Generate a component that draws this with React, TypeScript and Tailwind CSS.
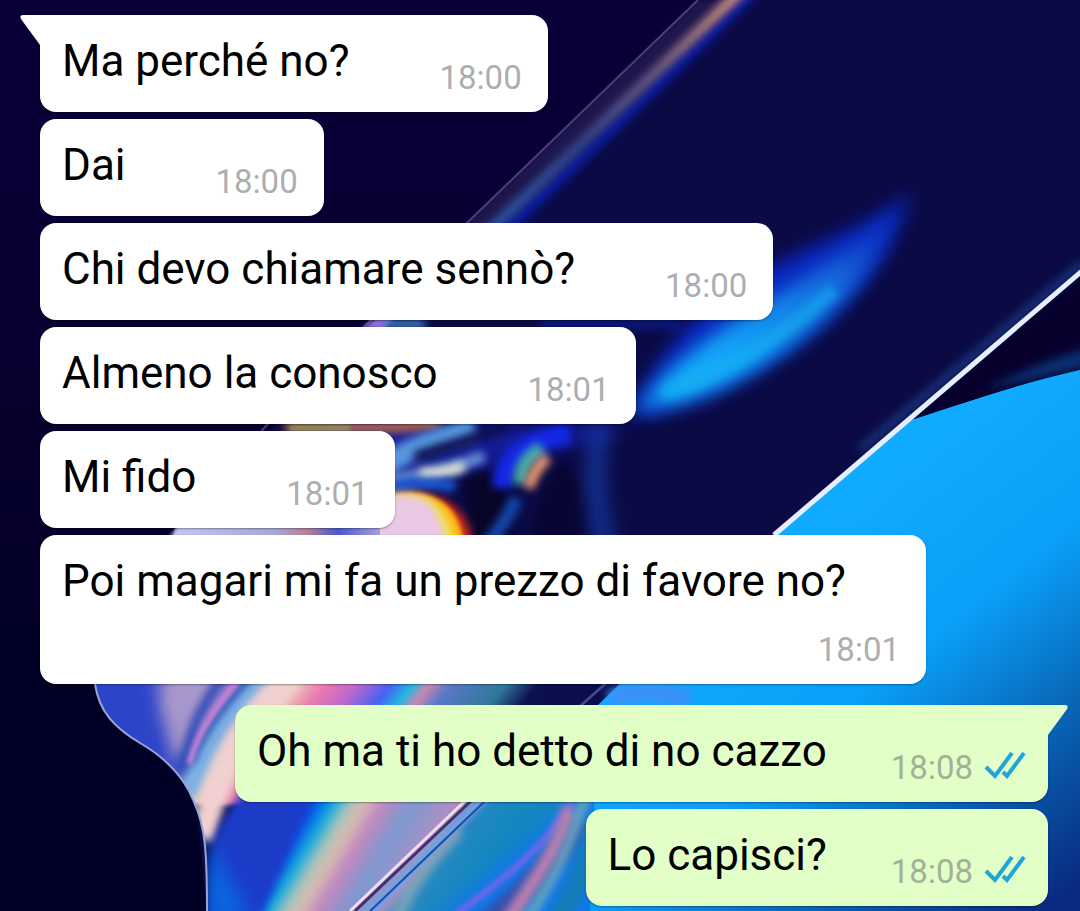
import clsx from "clsx";

type Message = {
    text: string;
    time: string;
    sent?: boolean;
    first?: boolean;
};

const messages: Message[] = [
    { text: "Ma perché no?", time: "18:00", first: true },
    { text: "Dai", time: "18:00" },
    { text: "Chi devo chiamare sennò?", time: "18:00" },
    { text: "Almeno la conosco", time: "18:01" },
    { text: "Mi fido", time: "18:01" },
    { text: "Poi magari mi fa un prezzo di favore no?", time: "18:01" },
    { text: "Oh ma ti ho detto di no cazzo", time: "18:08", sent: true, first: true },
    { text: "Lo capisci?", time: "18:08", sent: true },
];

function Wallpaper() {
    return (
        <svg
            aria-hidden="true"
            className="absolute inset-0 h-full w-full"
            viewBox="0 0 1080 911"
            preserveAspectRatio="xMidYMid slice"
        >
            <defs>
                <linearGradient id="night" x1="0" y1="0" x2="0" y2="1">
                    <stop offset="0" stopColor="#0a0038" />
                    <stop offset="0.45" stopColor="#06002f" />
                    <stop offset="0.75" stopColor="#020026" />
                    <stop offset="1" stopColor="#010026" />
                </linearGradient>
                <linearGradient id="sea" gradientUnits="userSpaceOnUse" x1="840" y1="520" x2="1110" y2="860">
                    <stop offset="0" stopColor="#10aaff" />
                    <stop offset="0.35" stopColor="#0a9ff8" />
                    <stop offset="0.65" stopColor="#0868b8" />
                    <stop offset="1" stopColor="#082a80" />
                </linearGradient>
                <linearGradient id="edge" gradientUnits="userSpaceOnUse" x1="735" y1="0" x2="480" y2="240">
                    <stop offset="0" stopColor="#d09080" />
                    <stop offset="0.3" stopColor="#6c5c80" />
                    <stop offset="0.6" stopColor="#344488" />
                    <stop offset="1" stopColor="#2858a8" />
                </linearGradient>
                <linearGradient id="arc" gradientUnits="userSpaceOnUse" x1="905" y1="200" x2="650" y2="410">
                    <stop offset="0" stopColor="#0a2cc0" stopOpacity="0.3" />
                    <stop offset="0.3" stopColor="#1568d8" />
                    <stop offset="0.7" stopColor="#12a4f8" />
                    <stop offset="0.9" stopColor="#14b0f8" />
                    <stop offset="1" stopColor="#1078e0" />
                </linearGradient>
                <linearGradient id="upperFolds" gradientUnits="userSpaceOnUse" x1="95" y1="0" x2="640" y2="0">
                    <stop offset="0" stopColor="#2c45c8" />
                    <stop offset="0.08" stopColor="#5560cc" />
                    <stop offset="0.14" stopColor="#a898cc" />
                    <stop offset="0.22" stopColor="#a08cc8" />
                    <stop offset="0.26" stopColor="#3a58c0" />
                    <stop offset="0.3" stopColor="#98b8e0" />
                    <stop offset="0.35" stopColor="#ecd0b8" />
                    <stop offset="0.41" stopColor="#ec78b0" />
                    <stop offset="0.47" stopColor="#b868d0" />
                    <stop offset="0.53" stopColor="#4860f0" />
                    <stop offset="0.57" stopColor="#20b8e0" />
                    <stop offset="0.6" stopColor="#c888b0" />
                    <stop offset="0.64" stopColor="#5878c8" />
                    <stop offset="0.74" stopColor="#307898" />
                    <stop offset="0.8" stopColor="#0c1050" />
                    <stop offset="1" stopColor="#0a0a48" />
                </linearGradient>
                <linearGradient id="lowerFolds" gradientUnits="userSpaceOnUse" x1="200" y1="0" x2="680" y2="0">
                    <stop offset="0" stopColor="#0a50e0" />
                    <stop offset="0.1" stopColor="#2038c0" />
                    <stop offset="0.2" stopColor="#1838c8" />
                    <stop offset="0.24" stopColor="#0a58e8" />
                    <stop offset="0.275" stopColor="#10a8e0" />
                    <stop offset="0.31" stopColor="#a8c4b8" />
                    <stop offset="0.34" stopColor="#d8bcb0" />
                    <stop offset="0.38" stopColor="#c088c0" />
                    <stop offset="0.44" stopColor="#7c98d0" />
                    <stop offset="0.53" stopColor="#b090c4" />
                    <stop offset="0.6" stopColor="#4c88c0" />
                    <stop offset="0.68" stopColor="#1488b8" />
                    <stop offset="0.76" stopColor="#1078e8" />
                    <stop offset="0.9" stopColor="#1880e0" />
                    <stop offset="1" stopColor="#1088c0" />
                </linearGradient>
                <linearGradient id="strip" gradientUnits="userSpaceOnUse" x1="170" y1="0" x2="380" y2="0">
                    <stop offset="0" stopColor="#c0c8f0" />
                    <stop offset="0.5" stopColor="#a8a8d8" />
                    <stop offset="0.65" stopColor="#b88098" />
                    <stop offset="0.8" stopColor="#4858d0" />
                    <stop offset="1" stopColor="#a8a0e0" />
                </linearGradient>
                <clipPath id="fabric">
                    <path d="M178 525 95 684C99 712 115 728 140 743 166 758 184 776 194 802 205 826 207 850 207 911H1080V525Z" />
                </clipPath>
                <filter id="soft2" filterUnits="userSpaceOnUse" x="-50" y="-50" width="1180" height="1011" colorInterpolationFilters="sRGB">
                    <feGaussianBlur stdDeviation="2" />
                </filter>
                <filter id="soft4" filterUnits="userSpaceOnUse" x="-50" y="-50" width="1180" height="1011" colorInterpolationFilters="sRGB">
                    <feGaussianBlur stdDeviation="4" />
                </filter>
                <filter id="soft9" filterUnits="userSpaceOnUse" x="-50" y="-50" width="1180" height="1011" colorInterpolationFilters="sRGB">
                    <feGaussianBlur stdDeviation="9" />
                </filter>
            </defs>

            <rect width="1080" height="911" fill="url(#night)" />

            {/* glass pane */}
            <path d="M698 0H1080V911H207L170 535 468 222Z" fill="#0b0a45" />
            <path d="M698 0H742L500 230H460Z" fill="#1e164c" filter="url(#soft2)" />
            <path d="M756 -10 496 240" stroke="#0b1ca0" strokeWidth="12" filter="url(#soft4)" />
            <path d="M744 -12 484 236" stroke="url(#edge)" strokeWidth="11" filter="url(#soft4)" />
            <path d="M698 0 468 222 265 427 170 535" fill="none" stroke="#4c3e78" strokeWidth="2" />
            <path d="M362 328 376 318H395L385 330Z" fill="#9070e0" filter="url(#soft2)" />
            <path d="M385 324H425" stroke="#3c78c0" strokeWidth="10" filter="url(#soft4)" />
            <path d="M540 324H680" stroke="#0a1880" strokeWidth="10" filter="url(#soft4)" />

            {/* blue flare */}
            <path d="M910 190C880 226 800 246 736 286 690 318 650 362 630 418 690 412 760 378 822 326 865 285 898 250 910 190Z" fill="#0a30e0" opacity="0.8" filter="url(#soft9)" />
            <path d="M892 214C852 254 800 280 745 315 700 342 658 378 632 412 700 405 768 368 820 323 852 293 882 260 892 214Z" fill="url(#arc)" filter="url(#soft9)" />
            <path d="M835 290C780 336 730 372 662 394" fill="none" stroke="#16b0f0" strokeWidth="14" opacity="0.6" filter="url(#soft4)" />

            {/* highlights around the crease */}
            <path d="M300 424H632L590 440 480 470 380 480Z" fill="#141c98" filter="url(#soft9)" />
            <path d="M285 427H400L440 423" fill="none" stroke="#b86c50" strokeWidth="11" filter="url(#soft4)" />
            <path d="M290 428H350" fill="none" stroke="#8a9860" strokeWidth="5" filter="url(#soft2)" />
            <path d="M380 470C410 445 440 440 475 428" fill="none" stroke="#5898e0" strokeWidth="22" filter="url(#soft4)" />
            <path d="M415 458C440 448 470 442 510 424" fill="none" stroke="#0e1050" strokeWidth="12" filter="url(#soft4)" />
            <path d="M385 480C425 474 450 470 484 456" fill="none" stroke="#6890d8" strokeWidth="12" filter="url(#soft4)" />
            <path d="M420 474C438 474 450 472 464 466" fill="none" stroke="#f4f0d0" strokeWidth="10" filter="url(#soft4)" />
            <path d="M380 488C410 484 430 482 455 486" fill="none" stroke="#1c58d8" strokeWidth="12" filter="url(#soft4)" />
            <path d="M465 482C480 462 520 470 510 545H475Z" fill="#080528" filter="url(#soft4)" />
            <path d="M372 555V506C395 490 430 490 448 502 464 512 472 526 474 555Z" fill="#d02818" filter="url(#soft4)" />
            <path d="M372 555V505C395 491 424 490 442 502 456 512 463 526 465 555Z" fill="#fcb010" filter="url(#soft2)" />
            <path d="M372 555V504C390 492 418 490 434 502 446 512 455 526 457 555Z" fill="#f4e448" filter="url(#soft4)" />
            <path d="M360 555V504C390 491 414 491 428 502 440 514 446 528 447 555Z" fill="#e8c8e4" filter="url(#soft4)" />
            <path d="M502 488C504 460 520 442 570 434" fill="none" stroke="#1428e8" strokeWidth="20" filter="url(#soft4)" />
            <path d="M520 484C520 468 526 458 542 448" fill="none" stroke="#48b0a8" strokeWidth="14" filter="url(#soft4)" />
            <path d="M529 488C533 472 539 464 548 458" fill="none" stroke="#f8a070" strokeWidth="11" filter="url(#soft4)" />
            <path d="M534 550C530 510 544 480 564 462 580 475 588 510 582 550Z" fill="#080534" filter="url(#soft4)" />
            <path d="M602 425C592 460 594 490 606 550" fill="none" stroke="#1a50d0" strokeWidth="18" opacity="0.6" filter="url(#soft9)" />
            <path d="M484 550C500 528 510 515 516 498" fill="none" stroke="#1448b0" strokeWidth="13" filter="url(#soft4)" />

            {/* folded fabric */}
            <g clipPath="url(#fabric)">
                <rect x="165" y="525" width="215" height="14" fill="url(#strip)" />
                <g transform="translate(0 694) skewX(-38) translate(0 -694)">
                    <rect x="60" y="670" width="600" height="135" fill="url(#upperFolds)" filter="url(#soft2)" />
                </g>
                <path d="M80 670H150L182 780 110 755Z" fill="#2c44c8" filter="url(#soft9)" />
                <path d="M170 670H218L188 755 176 750Z" fill="#a898cc" filter="url(#soft9)" />
                <path d="M224 676C200 708 190 730 184 768" fill="none" stroke="#2c48b8" strokeWidth="10" filter="url(#soft4)" />
                <path d="M242 676C212 710 198 736 190 764" fill="none" stroke="#c080d4" strokeWidth="8" filter="url(#soft2)" />
                <path d="M248 684C222 712 204 735 196 765" fill="none" stroke="#3858b8" strokeWidth="6" filter="url(#soft2)" />
                <path d="M266 676C230 712 208 740 190 795" fill="none" stroke="#78b0e4" strokeWidth="13" filter="url(#soft4)" />
                <path d="M292 676C250 715 222 750 202 840" fill="none" stroke="#f0d0d0" strokeWidth="26" filter="url(#soft4)" />
                <g transform="translate(0 805) skewX(-31) translate(0 -805)">
                    <rect x="290" y="790" width="440" height="150" fill="url(#lowerFolds)" filter="url(#soft4)" />
                </g>
                <path d="M252 780C238 800 218 822 212 845L206 930H255L312 800Z" fill="#1c3cc8" filter="url(#soft4)" />
                <path d="M208 840V920H252Z" fill="#0868e0" filter="url(#soft9)" />
                <path d="M500 785 376 925H440L610 785Z" fill="#1488c0" opacity="0.8" filter="url(#soft4)" />
                <path d="M560 815 425 925H600V800Z" fill="#1078e8" filter="url(#soft9)" />
                <path d="M458 830C430 860 412 880 396 920" fill="none" stroke="#88a8b8" strokeWidth="14" opacity="0.8" filter="url(#soft4)" />
                <path d="M580 822C562 855 530 885 485 925" fill="none" stroke="#3450a8" strokeWidth="22" filter="url(#soft4)" />
                <path d="M572 800C550 842 510 875 455 915" fill="none" stroke="#6868e8" strokeWidth="7" filter="url(#soft2)" />
                <path d="M570 808C558 850 535 880 505 925" fill="none" stroke="#c080b0" strokeWidth="14" filter="url(#soft4)" />
                <path d="M586 795C570 850 550 885 524 925" fill="none" stroke="#68a8c0" strokeWidth="10" filter="url(#soft4)" />
                <path d="M600 815C590 860 575 890 556 925" fill="none" stroke="#147cb8" strokeWidth="22" filter="url(#soft4)" />
                <path d="M484 798 366 915" stroke="#68a4e8" strokeWidth="8" filter="url(#soft2)" />
                <path d="M484 802 364 917" stroke="#2048a0" strokeWidth="2" />
                <path d="M472 800 355 911" stroke="#403070" strokeWidth="3" />
                <path d="M468 798 350 911" stroke="#f4dcec" strokeWidth="3" />
            </g>
            <path d="M177 528 95 684C99 712 115 728 140 743 166 758 184 776 194 802 205 826 207 850 207 911" fill="none" stroke="#98a4d8" strokeWidth="2" />

            {/* bright pane on the right */}
            <path d="M1080 370C1030 381 980 398 912 420L775 533 598 705 590 911H1080Z" fill="url(#sea)" />
            <path d="M610 700C635 688 660 692 690 700" fill="none" stroke="#3c90f8" strokeWidth="18" filter="url(#soft4)" />
            <path d="M578 708 612 678" stroke="#404890" strokeWidth="3" />
            <path d="M1080 273V370C1030 381 980 398 912 418Z" fill="#07002f" />
            <path d="M1090 348C1050 358 1015 374 985 390L1090 366Z" fill="#0a3070" filter="url(#soft4)" />
            <path d="M1084 262 860 450" stroke="#1a3880" strokeWidth="7" filter="url(#soft4)" />
            <path d="M1080 370C1030 381 980 398 912 420L775 533V560H1080Z" fill="url(#sea)" />
            <path d="M1082 271 774 535" stroke="#e6eeff" strokeWidth="5" />
        </svg>
    );
}

function Tail({ sent }: { sent?: boolean }) {
    return (
        <svg
            aria-hidden="true"
            viewBox="0 0 21 31"
            className={clsx(
                "absolute top-0 h-[31px] w-[21px]",
                sent ? "left-full -ml-px -scale-x-100 text-[#e1ffc7]" : "right-full -mr-px text-white"
            )}
        >
            <path d="M21 0H3Q-1 0 1 4L20 30H21Z" fill="currentColor" />
        </svg>
    );
}

function Ticks() {
    return (
        <svg aria-label="Letto" role="img" viewBox="0 0 42 39" className="h-[39px] w-[42px]">
            <path d="M2 19 11 28 28 5M19 24 23 28 40 5" fill="none" stroke="#1fa5dc" strokeWidth="4" />
        </svg>
    );
}

function Bubble({ text, time, sent, first }: Message) {
    return (
        <li
            className={clsx(
                "relative flex max-w-[886px] flex-wrap items-end gap-y-[13px] rounded-2xl pt-5 pb-[15px] pl-[22px] shadow-[0_1px_2px_rgba(0,0,0,0.35)]",
                sent ? "gap-x-16 self-end bg-[#e1ffc7] pr-[22px]" : "gap-x-[90px] self-start bg-white pr-[26px]",
                first && (sent ? "rounded-tr-none" : "rounded-tl-none"),
                first && sent && "mt-[14px]"
            )}
        >
            {first && <Tail sent={sent} />}
            <p className="pb-[10px] text-[44px] leading-[52px] text-black">{text}</p>
            <div className="ml-auto flex items-center gap-[11px]">
                <time className={clsx("text-[33px] leading-[39px]", sent ? "text-[#a3b199]" : "text-[#abafb1]")}>{time}</time>
                {sent && <Ticks />}
            </div>
        </li>
    );
}

export default function App() {
    return (
        <main className="relative min-h-screen overflow-hidden bg-[#06002f] font-['Roboto',sans-serif]">
            <Wallpaper />
            <ul className="relative flex flex-col gap-[7px] pt-[15px] pr-8 pb-[5px] pl-10">
                {messages.map((message) => (
                    <Bubble key={message.text} {...message} />
                ))}
            </ul>
        </main>
    );
}
